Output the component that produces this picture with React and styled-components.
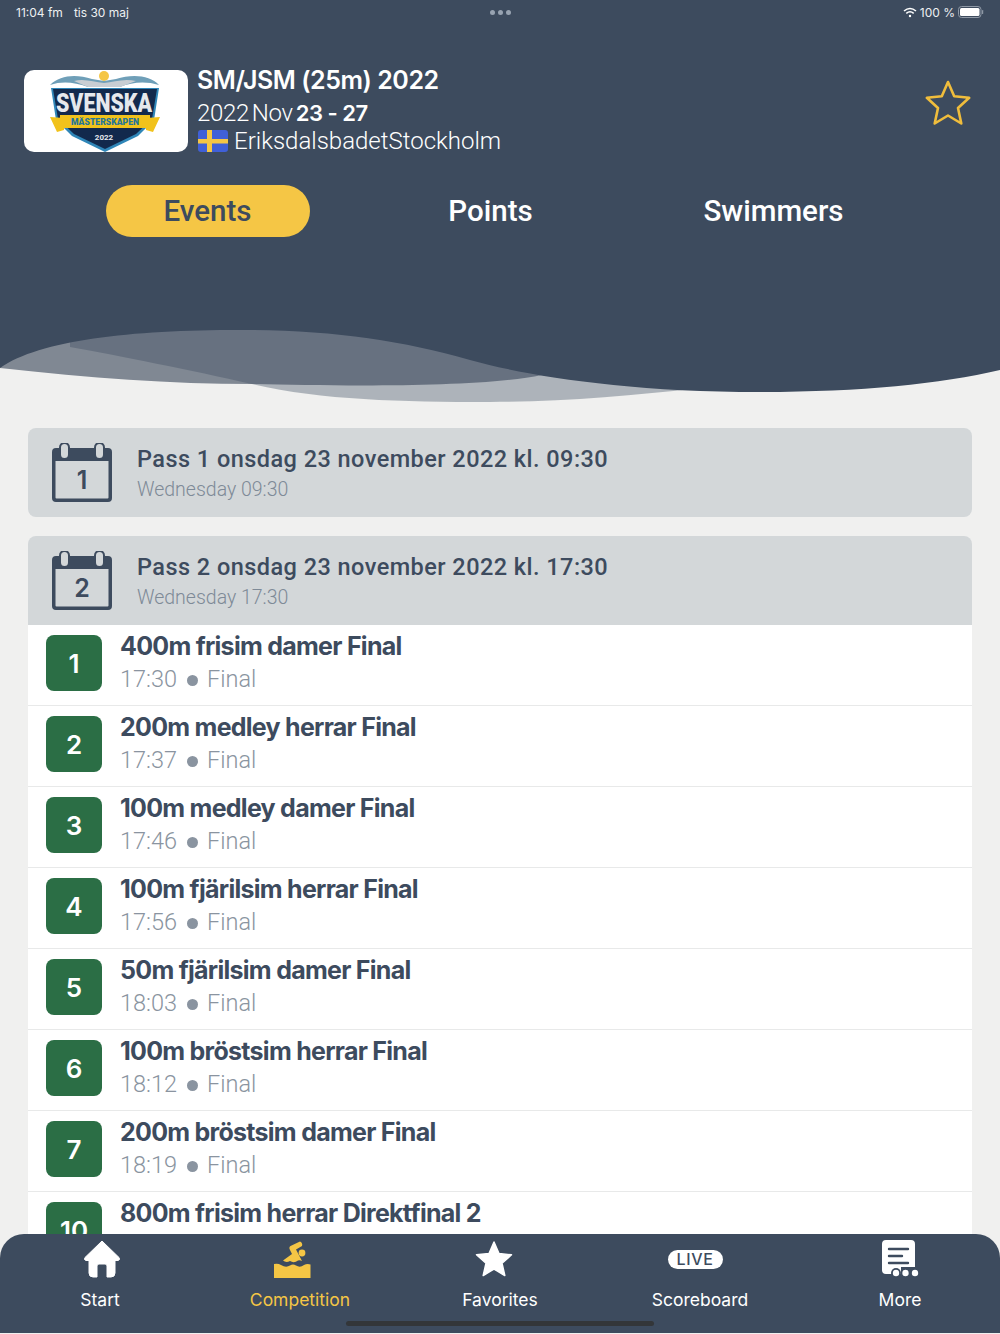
import styled, { createGlobalStyle } from "styled-components";

const GlobalStyle = createGlobalStyle`
  html, body {
    margin: 0;
    padding: 0;
    background: #f0f0ef;
  }
  * {
    box-sizing: border-box;
  }
`;

const Page = styled.div`
  position: relative;
  width: 1000px;
  height: 1334px;
  overflow: hidden;
  background: #f0f0ef;
  font-family: Roboto, sans-serif;
`;

const Header = styled.header`
  height: 330px;
  background: #3d4b5e;
  color: #fff;
`;

const StatusBar = styled.div`
  display: grid;
  grid-template-columns: 1fr auto 1fr;
  align-items: center;
  height: 24px;
  padding: 0 16px;
  font-family: Inter, sans-serif;
  font-size: 12px;
  color: #eef0f2;
`;

const StatusLeft = styled.div`
  display: flex;
  gap: 11px;
`;

const StatusRight = styled.div`
  display: flex;
  justify-content: flex-end;
  align-items: center;
  gap: 3px;
`;

const Dots = styled.div`
  display: flex;
  gap: 3px;
`;

const Dot = styled.span`
  width: 5px;
  height: 5px;
  border-radius: 50%;
  background: #98a3b1;
`;

const CompetitionRow = styled.div`
  display: flex;
  align-items: center;
  height: 82px;
  margin-top: 46px;
  padding: 0 28px 0 24px;
`;

const LogoBox = styled.div`
  flex: none;
  width: 164px;
  height: 82px;
  border-radius: 10px;
  background: #fff;
  overflow: hidden;
`;

const CompetitionInfo = styled.div`
  flex: 1;
  display: flex;
  flex-direction: column;
  padding-left: 9px;
`;

const CompetitionTitle = styled.div`
  height: 31px;
  padding-top: 2px;
  font-family: Inter, sans-serif;
  font-size: 25px;
  font-weight: 600;
  line-height: 22px;
  letter-spacing: -0.45px;
`;

const DateLine = styled.div`
  display: flex;
  gap: 3px;
  height: 28px;
  font-size: 24px;
  font-weight: 300;
  line-height: 30px;
  letter-spacing: -0.35px;
`;

const DateBold = styled.span`
  font-family: Inter, sans-serif;
  font-size: 22px;
  font-weight: 600;
  letter-spacing: -0.5px;
`;

const PlaceLine = styled.div`
  display: flex;
  align-items: center;
  gap: 6px;
  padding-left: 1px;
  font-size: 24px;
  font-weight: 300;
  line-height: 30px;
`;

const FavoriteStar = styled.div`
  flex: none;
  height: 48px;
  margin-top: -16px;
`;

const Tabs = styled.nav`
  display: grid;
  grid-template-columns: repeat(3, 283px);
  margin-top: 33px;
  padding-left: 66px;
`;

const TabCell = styled.div`
  display: flex;
  justify-content: center;
`;

const Tab = styled.div`
  width: 204px;
  height: 52px;
  border-radius: 26px;
  background: ${(p) => (p.$active ? "#f5c645" : "transparent")};
  color: ${(p) => (p.$active ? "#3d4b5e" : "#fff")};
  font-size: 29.5px;
  font-weight: 500;
  line-height: 53px;
  text-align: center;
`;

const Wave = styled.svg`
  display: block;
  width: 1000px;
  height: 80px;
`;

const Content = styled.main`
  display: flex;
  flex-direction: column;
  gap: 19px;
  margin-top: 18px;
  padding: 0 28px;
`;

const SessionHeader = styled.div`
  display: flex;
  align-items: center;
  height: 89px;
  padding-left: 24px;
  border-radius: ${(p) => (p.$open ? "8px 8px 0 0" : "8px")};
  background: #d3d7d9;
`;

const SessionIcon = styled.div`
  position: relative;
  flex: none;
  width: 60px;
  height: 60px;
  margin-right: 25px;
`;

const SessionNumber = styled.span`
  position: absolute;
  left: 0;
  right: 0;
  top: 22px;
  color: #3d4b5e;
  font-family: Inter, sans-serif;
  font-size: 25px;
  font-weight: 600;
  line-height: 30px;
  text-align: center;
`;

const SessionText = styled.div`
  display: flex;
  flex-direction: column;
`;

const SessionTitle = styled.div`
  color: #3d4b5e;
  font-size: 23.5px;
  font-weight: 500;
  line-height: 30px;
  letter-spacing: 0.45px;
`;

const SessionSub = styled.div`
  margin-top: 4px;
  color: #7e8a97;
  font-size: 19.5px;
  font-weight: 300;
  line-height: 24px;
`;

const EventList = styled.div`
  margin-top: -19px;
  background: #fff;
`;

const EventRow = styled.div`
  display: flex;
  height: 81px;
  padding: 10px 0 0 18px;
  border-bottom: 1px solid #e8e9e9;
`;

const Badge = styled.div`
  flex: none;
  width: 56px;
  height: 56px;
  margin-right: 19px;
  border-radius: 8px;
  background: #2b6e45;
  color: #fff;
  font-family: Inter, sans-serif;
  font-size: 26px;
  font-weight: 600;
  line-height: 58px;
  text-align: center;
`;

const EventText = styled.div`
  display: flex;
  flex-direction: column;
  margin-left: -1px;
`;

const EventTitle = styled.div`
  color: #3d4b5e;
  font-family: Inter, sans-serif;
  font-size: 25px;
  font-weight: 700;
  line-height: 22px;
  letter-spacing: -0.73px;
`;

const EventSub = styled.div`
  display: flex;
  align-items: center;
  margin-top: 7px;
  color: #8a94a0;
  font-size: 23.5px;
  font-weight: 300;
  line-height: 30px;
`;

const Bullet = styled.span`
  width: 11px;
  height: 11px;
  margin: 3px 9px 0 10px;
  border-radius: 50%;
  background: #8a94a0;
`;

const BottomBar = styled.nav`
  position: absolute;
  left: 0;
  right: 0;
  top: 1234px;
  display: grid;
  grid-template-columns: repeat(5, 200px);
  height: 99px;
  border-radius: 24px 24px 0 0;
  background: #3d4b5e;
`;

const BarItem = styled.div`
  display: flex;
  flex-direction: column;
  align-items: center;
  color: ${(p) => (p.$active ? "#f5c645" : "#fff")};
  font-family: Inter, sans-serif;
  font-size: 17.5px;
  line-height: 22px;
`;

const BarIcon = styled.div`
  display: flex;
  align-items: center;
  justify-content: center;
  height: 55px;
  padding-bottom: 5px;
  margin-left: ${(p) => (p.$shift || 0) * 2}px;
`;

const HomeIndicator = styled.div`
  position: absolute;
  left: 346px;
  top: 87px;
  width: 308px;
  height: 5px;
  border-radius: 3px;
  background: #333639;
`;

const LivePill = styled.div`
  width: 55px;
  height: 19px;
  border-radius: 10px;
  background: #fff;
  color: #3d4b5e;
  font-size: 16px;
  font-weight: 500;
  line-height: 19.5px;
  letter-spacing: 0.6px;
  text-align: center;
`;

const events = [
  { id: 1, title: "400m frisim damer Final", time: "17:30" },
  { id: 2, title: "200m medley herrar Final", time: "17:37" },
  { id: 3, title: "100m medley damer Final", time: "17:46" },
  { id: 4, title: "100m fjärilsim herrar Final", time: "17:56" },
  { id: 5, title: "50m fjärilsim damer Final", time: "18:03" },
  { id: 6, title: "100m bröstsim herrar Final", time: "18:12" },
  { id: 7, title: "200m bröstsim damer Final", time: "18:19" },
  { id: 10, title: "800m frisim herrar Direktfinal 2", time: "18:28" },
];

function Logo() {
  return (
    <svg width="164" height="82" viewBox="0 0 164 82">
      <circle cx="80" cy="6" r="5" fill="#f5c645" />
      <path d="M26 15C36 5 52 4 68 9L80 11L92 9C108 4 126 5 135 15C122 11 108 12 96 17H64C50 12 38 11 26 15Z" fill="#6f9fb8" />
      <path d="M50 11C60 8 70 12 80 13C90 12 100 8 112 11L96 17H64Z" fill="#c9ced3" />
      <path d="M27 18H135L130 50L114 66L81 82L48 66L32 50Z" fill="#2f86b8" />
      <path d="M29 19H133L128 49L112 64L81 79L50 64L34 49Z" fill="#12294c" />
      <text x="80" y="42" textAnchor="middle" fontFamily="Roboto, sans-serif" fontSize="26" fontWeight="900" fill="#e6e8ec" textLength="96" lengthAdjust="spacingAndGlyphs">SVENSKA</text>
      <path d="M26 47L40 48V60L33 62Z M136 47L122 48V60L129 62Z" fill="#f1c21b" />
      <rect x="36" y="45" width="90" height="13" fill="#f1c21b" />
      <text x="81" y="55" textAnchor="middle" fontFamily="Roboto, sans-serif" fontSize="9" fontWeight="900" fill="#24759a" textLength="68" lengthAdjust="spacingAndGlyphs">MÄSTERSKAPEN</text>
      <text x="80" y="70" textAnchor="middle" fontFamily="Roboto, sans-serif" fontSize="8" fontWeight="700" fill="#e6e8ec">2022</text>
    </svg>
  );
}

function SwedishFlag() {
  return (
    <svg width="30" height="22" viewBox="0 0 30 22">
      <rect width="30" height="22" rx="3" fill="#4060d8" />
      <rect x="9" width="5" height="22" fill="#f5c645" />
      <rect y="9" width="30" height="4.5" fill="#f5c645" />
    </svg>
  );
}

function StarOutline() {
  return (
    <svg width="48" height="48" viewBox="0 0 48 48">
      <path
        d="M24 3L30.2 17.3L45.2 18.8L34 29L37.3 44.5L24 36.5L10.7 44.5L14 29L2.8 18.8L17.8 17.3Z"
        fill="none"
        stroke="#f0bd3c"
        strokeWidth="2.6"
        strokeLinejoin="round"
      />
    </svg>
  );
}

function Calendar() {
  return (
    <svg width="60" height="60" viewBox="0 0 60 60">
      <path
        d="M4 5H56A4 4 0 0 1 60 9V55A4 4 0 0 1 56 59H4A4 4 0 0 1 0 55V9A4 4 0 0 1 4 5ZM3.5 18V54.5A1 1 0 0 0 4.5 55.5H55.5A1 1 0 0 0 56.5 54.5V18Z"
        fill="#3d4b5e"
        fillRule="evenodd"
      />
      <rect x="8" y="0" width="9" height="16" rx="4.5" fill="#d3d7d9" stroke="#3d4b5e" strokeWidth="2" />
      <rect x="43" y="0" width="9" height="16" rx="4.5" fill="#d3d7d9" stroke="#3d4b5e" strokeWidth="2" />
    </svg>
  );
}

function HomeIcon() {
  return (
    <svg width="38" height="38" viewBox="0 0 38 38">
      <path
        d="M19 1L36 17.5Q37.5 20 35 20.5H32V33Q32 37 28 37H24V26Q24 24 22 24H16Q14 24 14 26V37H10Q6 37 6 33V20.5H3Q0.5 20 2 17.5Z"
        fill="#fff"
        stroke="#fff"
        strokeLinejoin="round"
      />
    </svg>
  );
}

function SwimIcon() {
  return (
    <svg width="38" height="38" viewBox="0 0 38 38" fill="#f5c645">
      <circle cx="29" cy="13" r="3.4" />
      <path d="M27 1.5L17.5 6Q15.5 7.5 17 10L19 14L10 20.5Q13 23 17 21Q21 23.5 25 20.5Q27 20 29 21L23 9.5L29 6Q30 3 27 1.5Z" />
      <path d="M1 24Q5 23 8 25Q13 28 17 25.5Q20 23.5 23 25.5Q27 28 31 25Q34 23.5 37.5 24.5V38H1Z" />
    </svg>
  );
}

function StarFilled() {
  return (
    <svg width="38" height="38" viewBox="0 0 38 38">
      <path
        d="M19 2L24 13.5L36.5 14.8L27 23.2L29.8 35.5L19 29L8.2 35.5L11 23.2L1.5 14.8L14 13.5Z"
        fill="#fff"
        stroke="#fff"
        strokeWidth="1.5"
        strokeLinejoin="round"
      />
    </svg>
  );
}

function MoreIcon() {
  return (
    <svg width="38" height="38" viewBox="0 0 38 38">
      <path d="M5 0H30Q34 0 34 4V27H20V34H5Q1 34 1 30V4Q1 0 5 0Z" fill="#fff" />
      <path d="M8 9H27M8 16H21M8 23H27" stroke="#3d4b5e" strokeWidth="2.4" strokeLinecap="round" />
      <circle cx="15" cy="33" r="5" fill="#3d4b5e" />
      <circle cx="15" cy="33" r="3.2" fill="#fff" />
      <circle cx="24.5" cy="33" r="3.2" fill="#fff" />
      <circle cx="34" cy="33" r="3.2" fill="#fff" />
    </svg>
  );
}

function App() {
  return (
    <Page>
      <GlobalStyle />
      <Header>
        <StatusBar>
          <StatusLeft>
            <span>11:04 fm</span>
            <span>tis 30 maj</span>
          </StatusLeft>
          <Dots>
            <Dot />
            <Dot />
            <Dot />
          </Dots>
          <StatusRight>
            <svg width="14" height="11" viewBox="0 0 14 11" fill="none" stroke="#fff" strokeWidth="1.6">
              <path d="M1 4Q7 -1 13 4" />
              <path d="M3.3 6.3Q7 3.2 10.7 6.3" />
              <circle cx="7" cy="9" r="1.2" fill="#fff" stroke="none" />
            </svg>
            <span>100 %</span>
            <svg width="26" height="12" viewBox="0 0 26 12">
              <rect x="0.5" y="0.5" width="22.5" height="11" rx="3" fill="none" stroke="#8f99a6" />
              <rect x="2" y="2" width="19.5" height="8" rx="1.5" fill="#fff" />
              <rect x="24" y="4" width="1.2" height="4" rx="0.6" fill="#8f99a6" />
            </svg>
          </StatusRight>
        </StatusBar>
        <CompetitionRow>
          <LogoBox>
            <Logo />
          </LogoBox>
          <CompetitionInfo>
            <CompetitionTitle>SM/JSM (25m) 2022</CompetitionTitle>
            <DateLine>
              <span>2022</span>
              <span>Nov</span>
              <DateBold>23 - 27</DateBold>
            </DateLine>
            <PlaceLine>
              <SwedishFlag />
              <span>EriksdalsbadetStockholm</span>
            </PlaceLine>
          </CompetitionInfo>
          <FavoriteStar>
            <StarOutline />
          </FavoriteStar>
        </CompetitionRow>
        <Tabs>
          <TabCell>
            <Tab $active>Events</Tab>
          </TabCell>
          <TabCell>
            <Tab>Points</Tab>
          </TabCell>
          <TabCell>
            <Tab>Swimmers</Tab>
          </TabCell>
        </Tabs>
      </Header>
      <Wave viewBox="0 0 1000 80">
        <path d="M70 17C120 26 190 40 252 54C320 70 400 72 490 72C560 72 630 66 700 58V0H70Z" fill="#3d4b5e" opacity="0.37" />
        <path d="M0 38C90 48 170 54 252 54C340 56 480 58 542 45L600 0H0Z" fill="#3d4b5e" opacity="0.63" />
        <path d="M0 0V38C40 10 130 0 240 0Z M240 0C330 0 400 10 470 30C520 44 620 62 760 62C860 62 940 54 1000 40V0Z" fill="#3d4b5e" />
      </Wave>
      <Content>
        <SessionHeader>
          <SessionIcon>
            <Calendar />
            <SessionNumber>1</SessionNumber>
          </SessionIcon>
          <SessionText>
            <SessionTitle>Pass 1 onsdag 23 november 2022 kl. 09:30</SessionTitle>
            <SessionSub>Wednesday 09:30</SessionSub>
          </SessionText>
        </SessionHeader>
        <SessionHeader $open>
          <SessionIcon>
            <Calendar />
            <SessionNumber>2</SessionNumber>
          </SessionIcon>
          <SessionText>
            <SessionTitle>Pass 2 onsdag 23 november 2022 kl. 17:30</SessionTitle>
            <SessionSub>Wednesday 17:30</SessionSub>
          </SessionText>
        </SessionHeader>
        <EventList>
          {events.map((event) => (
            <EventRow key={event.id}>
              <Badge>{event.id}</Badge>
              <EventText>
                <EventTitle>{event.title}</EventTitle>
                <EventSub>
                  {event.time}
                  <Bullet />
                  Final
                </EventSub>
              </EventText>
            </EventRow>
          ))}
        </EventList>
      </Content>
      <BottomBar>
        <BarItem>
          <BarIcon $shift={2}>
            <HomeIcon />
          </BarIcon>
          Start
        </BarItem>
        <BarItem $active>
          <BarIcon $shift={-8}>
            <SwimIcon />
          </BarIcon>
          Competition
        </BarItem>
        <BarItem>
          <BarIcon $shift={-6}>
            <StarFilled />
          </BarIcon>
          Favorites
        </BarItem>
        <BarItem>
          <BarIcon $shift={-5}>
            <LivePill>LIVE</LivePill>
          </BarIcon>
          Scoreboard
        </BarItem>
        <BarItem>
          <BarIcon>
            <MoreIcon />
          </BarIcon>
          More
        </BarItem>
        <HomeIndicator />
      </BottomBar>
    </Page>
  );
}

export default App;
